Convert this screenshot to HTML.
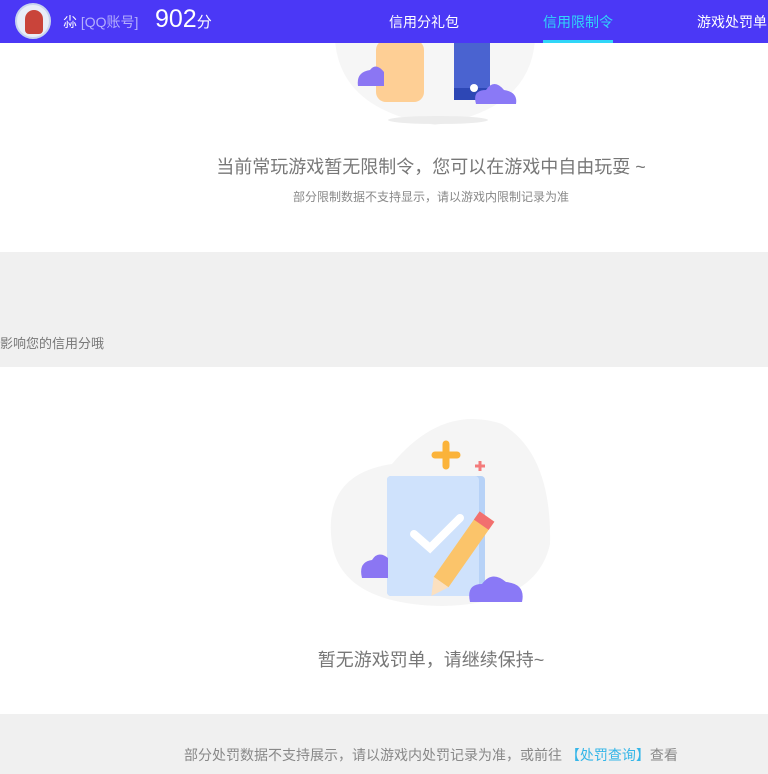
<!DOCTYPE html>
<html><head><meta charset="utf-8"><style>
*{margin:0;padding:0;box-sizing:border-box}
body{width:768px;height:774px;overflow:hidden;background:#fff;font-family:"Liberation Sans","Noto Sans CJK SC",sans-serif;position:relative}
.hdr{position:absolute;left:0;top:0;width:768px;height:43px;background:#4b38f6;color:#fff;z-index:5}
.av{position:absolute;left:15px;top:3px;width:36px;height:36px;border-radius:50%;background:#e8eef8;border:2px solid #c8d4ee;overflow:hidden}
.av i{position:absolute;left:8px;top:5px;width:18px;height:24px;background:#c9443a;border-radius:9px 9px 4px 4px}
.nick{position:absolute;left:63px;top:12px;font-size:14px}
.nick span{color:#b4aefc}
.score{position:absolute;left:155px;top:5px;font-size:25px}
.score small{font-size:15px}
.nav{position:absolute;top:12px;font-size:14px}
.act{color:#30d6f8}
.ul{position:absolute;left:543px;top:40px;width:70px;height:3px;background:#30d6f8}
.gray{position:absolute;left:0;width:768px;background:#f0f0f0}
.t1{position:absolute;left:47px;width:768px;text-align:center;color:#888;white-space:nowrap}
</style></head><body>
<div class="hdr">
<div class="av"><i></i></div>
<div class="nick">尛 <span>[QQ账号]</span></div>
<div class="score">902<small>分</small></div>
<div class="nav" style="left:389px">信用分礼包</div>
<div class="nav act" style="left:543px">信用限制令</div>
<div class="nav" style="left:697px">游戏处罚单</div>
<div class="ul"></div>
</div>
<svg style="position:absolute;left:330px;top:30px" width="210" height="100">
<path d="M5 10 Q10 80 105 95 Q200 80 205 10 Z" fill="#f6f6f6"/>
<ellipse cx="108" cy="90" rx="50" ry="4" fill="#ececec"/>
<rect x="46" y="10" width="48" height="62" rx="10" fill="#fecf95"/>
<rect x="124" y="10" width="36" height="60" fill="#4a63d0"/>
<rect x="124" y="58" width="36" height="12" fill="#2d47b5"/>
<circle cx="144" cy="58" r="4" fill="#fff"/>
<path d="M28 56 Q26 42 40 40 Q46 32 54 42 L54 56Z" fill="#8b76f3"/>
<path d="M146 74 Q142 60 156 60 Q164 48 174 60 Q188 62 186 74Z" fill="#8a79f6"/>
</svg>
<div class="t1" style="top:153px;font-size:18px;color:#777">当前常玩游戏暂无限制令，您可以在游戏中自由玩耍 ~</div>
<div class="t1" style="top:188px;font-size:12px">部分限制数据不支持显示，请以游戏内限制记录为准</div>
<div class="gray" style="top:252px;height:115px"></div>
<div style="position:absolute;left:0;top:333px;font-size:13px;color:#777">影响您的信用分哦</div>
<svg style="position:absolute;left:322px;top:414px" width="235" height="200">
<path d="M10 130 Q0 60 70 50 Q120 -10 180 10 Q230 40 228 130 Q215 190 120 192 Q20 190 10 130Z" fill="#f5f5f5"/>
<rect x="65" y="62" width="98" height="120" rx="4" fill="#b7d2f7"/>
<rect x="65" y="62" width="92" height="120" rx="4" fill="#cfe2fc"/>
<path d="M92 120 L108 134 L138 104" stroke="#fff" stroke-width="8" fill="none" stroke-linecap="round"/>
<path d="M124 30 v22 M113 41 h22" stroke="#fbb33a" stroke-width="7" stroke-linecap="round"/>
<path d="M158 47 v10 M153 52 h10" stroke="#f37b7b" stroke-width="3"/>
<path d="M40 164 Q36 148 50 146 Q56 136 66 144 L66 164Z" fill="#8b76f3"/>
<path d="M148 188 Q144 170 160 170 Q170 156 184 168 Q204 170 200 188Z" fill="#8a79f6"/>
<g transform="rotate(35 140 140)"><rect x="130" y="95" width="18" height="80" fill="#fbc46a"/><rect x="130" y="95" width="18" height="10" fill="#f26f6f"/><path d="M130 175 L139 192 L148 175Z" fill="#fbe0c0"/></g>
</svg>
<div class="t1" style="top:646px;font-size:18px;color:#777">暂无游戏罚单，请继续保持~</div>
<div class="gray" style="top:714px;height:60px"></div>
<div style="position:absolute;left:184px;top:745px;font-size:14px;color:#888;white-space:nowrap">部分处罚数据不支持展示，请以游戏内处罚记录为准，或前往 <span style="color:#35b6e8">【处罚查询】</span>查看</div>
</body></html>
